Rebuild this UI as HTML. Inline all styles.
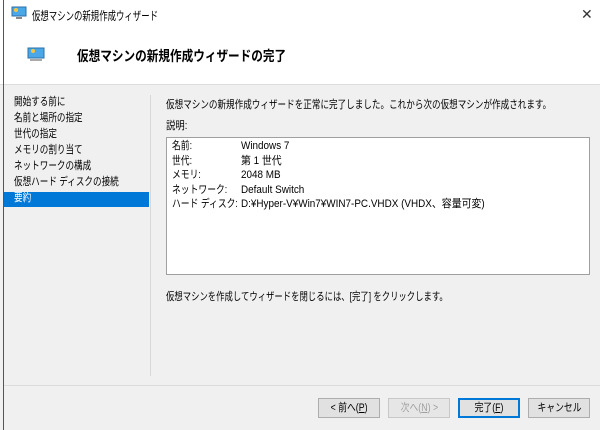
<!DOCTYPE html>
<html><head><meta charset="utf-8"><style>
*{margin:0;padding:0;box-sizing:border-box}
body{width:600px;height:430px;background:#f0f0f0;font-family:"Liberation Sans","Noto Sans CJK JP",sans-serif;font-size:11px;color:#000;position:relative;overflow:hidden}
.a{position:absolute;white-space:nowrap;transform-origin:0 0}
.btn{position:absolute;top:398px;width:62px;height:20px;background:#e1e1e1;border:1px solid #adadad;text-align:center;line-height:18px;font-size:11px}
.btn span{display:inline-block;transform:scaleX(.8)}
</style></head><body>
<div class="a" style="left:0;top:0;width:600px;height:85px;background:#fff;border-bottom:1px solid #dcdcdc"></div>
<div class="a" style="left:3px;top:0;width:1px;height:430px;background:#555"></div>
<svg class="a" style="left:11px;top:6px" width="16" height="14"><rect x="1" y="1" width="14" height="9" fill="#4aa8e8" stroke="#2d6fa8"/><circle cx="5" cy="4" r="2" fill="#f5c542"/><rect x="5" y="11" width="6" height="2" fill="#888"/></svg>
<div class="a" style="left:32px;top:7px;font-size:12px;transform:scaleX(.7)">仮想マシンの新規作成ウィザード</div>
<div class="a" style="left:581px;top:6px;font-size:14px;color:#333">✕</div>
<svg class="a" style="left:27px;top:47px" width="18" height="14"><rect x="1" y="1" width="16" height="10" fill="#4aa8e8" stroke="#2d6fa8"/><circle cx="6" cy="4" r="2" fill="#f5c542"/><rect x="3" y="12" width="12" height="2" fill="#aaa"/></svg>
<div class="a" style="left:77px;top:46px;font-size:14px;font-weight:bold;transform:scaleX(.83)">仮想マシンの新規作成ウィザードの完了</div>
<div class="a" style="left:4px;top:192px;width:145px;height:15px;background:#0078d7"></div>
<div class="a" style="left:14px;top:94px;line-height:16px;transform:scaleX(.78)">開始する前に<br>名前と場所の指定<br>世代の指定<br>メモリの割り当て<br>ネットワークの構成<br>仮想ハード ディスクの接続<br><span style="color:#fff">要約</span></div>
<div class="a" style="left:150px;top:95px;width:1px;height:281px;background:#d8d8d8"></div>
<div class="a" style="left:166px;top:96px;transform:scaleX(.78)">仮想マシンの新規作成ウィザードを正常に完了しました。これから次の仮想マシンが作成されます。</div>
<div class="a" style="left:166px;top:117px;transform:scaleX(.85)">説明:</div>
<div class="a" style="left:166px;top:137px;width:424px;height:138px;background:#fff;border:1px solid #a0a0a0"></div>
<div class="a" style="left:172px;top:139px;line-height:14.5px;transform:scaleX(.8)">名前:<br>世代:<br>メモリ:<br>ネットワーク:<br>ハード ディスク:</div>
<div class="a" style="left:241px;top:139px;line-height:14.5px;transform:scaleX(.9)">Windows 7<br>第 1 世代<br>2048 MB<br>Default Switch<br>D:¥Hyper-V¥Win7¥WIN7-PC.VHDX (VHDX、容量可変)</div>
<div class="a" style="left:166px;top:288px;transform:scaleX(.76)">仮想マシンを作成してウィザードを閉じるには、[完了] をクリックします。</div>
<div class="a" style="left:4px;top:385px;width:596px;height:1px;background:#dcdcdc"></div>
<div class="btn" style="left:318px"><span>&lt; 前へ(<u>P</u>)</span></div>
<div class="btn" style="left:388px;color:#a0a0a0;background:#e6e6e6;border-color:#c8c8c8"><span>次へ(<u>N</u>) &gt;</span></div>
<div class="btn" style="left:458px;border:2px solid #0078d7;line-height:16px"><span>完了(<u>F</u>)</span></div>
<div class="btn" style="left:528px"><span>キャンセル</span></div>
</body></html>
